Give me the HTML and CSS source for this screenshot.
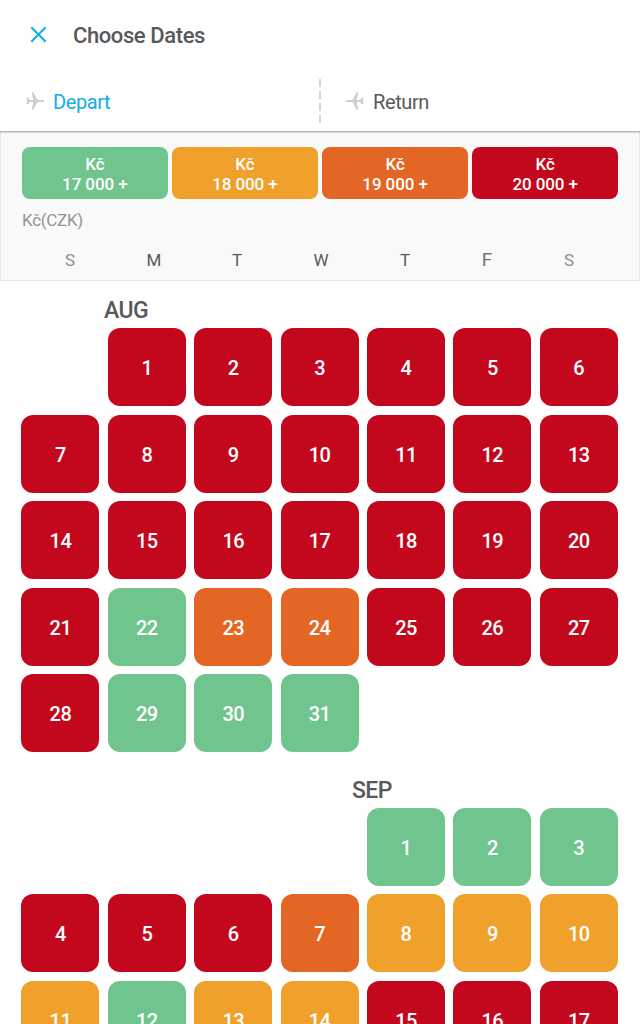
FILE: index.html
```html
<!DOCTYPE html>
<html lang="en">
<head>
    <meta charset="UTF-8">
    <title>Choose Dates</title>
    <link rel="stylesheet" href="styles.css">
</head>
<body>

    <header class="header">
        <div class="title-bar">
            <svg class="close" viewBox="0 0 16 16"><path d="M1.2 1.2 14.8 14.8M14.8 1.2 1.2 14.8"/></svg>
            <h1>Choose Dates</h1>
        </div>
        <div class="tabs">
            <div class="tab depart">
                <svg class="plane" viewBox="0 0 18 18"><path d="M18 9c0-.7-.5-1.100-1.200-1.100H11.600L7.500.500H5.700L7.300 7.900H3.900L2.200 5.800H.3L1.200 9 .3 12.200H2.200L3.900 10.100H7.300L5.700 17.500H7.500L11.600 10.100H16.800C17.500 10.100 18 9.700 18 9z"/></svg>
                <span>Depart</span>
            </div>
            <svg class="divider" viewBox="0 0 2 44"><path d="M1 0V44"/></svg>
            <div class="tab return">
                <svg class="plane flip" viewBox="0 0 18 18"><path d="M18 9c0-.7-.5-1.100-1.200-1.100H11.600L7.500.500H5.700L7.300 7.900H3.900L2.200 5.800H.3L1.200 9 .3 12.200H2.200L3.900 10.100H7.300L5.700 17.500H7.500L11.600 10.100H16.800C17.500 10.100 18 9.700 18 9z"/></svg>
                <span>Return</span>
            </div>
        </div>
    </header>

    <!-- price legend and weekdays -->
    <section class="panel">
        <div class="legend">
            <div class="price green">Kč<br>17 000 +</div>
            <div class="price yellow">Kč<br>18 000 +</div>
            <div class="price orange">Kč<br>19 000 +</div>
            <div class="price red">Kč<br>20 000 +</div>
        </div>
        <p class="currency">Kč(CZK)</p>
        <div class="weekdays">
            <span class="weekend">S</span>
            <span>M</span>
            <span>T</span>
            <span>W</span>
            <span>T</span>
            <span class="friday">F</span>
            <span class="weekend">S</span>
        </div>
    </section>

    <main class="calendar">
        <section class="month">
            <h2 class="aug">AUG</h2>
            <div class="days">
                <div class="day red start-mon">1</div>
                <div class="day red">2</div>
                <div class="day red">3</div>
                <div class="day red">4</div>
                <div class="day red">5</div>
                <div class="day red">6</div>
                <div class="day red">7</div>
                <div class="day red">8</div>
                <div class="day red">9</div>
                <div class="day red">10</div>
                <div class="day red">11</div>
                <div class="day red">12</div>
                <div class="day red">13</div>
                <div class="day red">14</div>
                <div class="day red">15</div>
                <div class="day red">16</div>
                <div class="day red">17</div>
                <div class="day red">18</div>
                <div class="day red">19</div>
                <div class="day red">20</div>
                <div class="day red">21</div>
                <div class="day green">22</div>
                <div class="day orange">23</div>
                <div class="day orange">24</div>
                <div class="day red">25</div>
                <div class="day red">26</div>
                <div class="day red">27</div>
                <div class="day red">28</div>
                <div class="day green">29</div>
                <div class="day green">30</div>
                <div class="day green">31</div>
            </div>
        </section>

        <section class="month">
            <h2 class="sep">SEP</h2>
            <div class="days">
                <div class="day green start-thu">1</div>
                <div class="day green">2</div>
                <div class="day green">3</div>
                <div class="day red">4</div>
                <div class="day red">5</div>
                <div class="day red">6</div>
                <div class="day orange">7</div>
                <div class="day yellow">8</div>
                <div class="day yellow">9</div>
                <div class="day yellow">10</div>
                <div class="day yellow">11</div>
                <div class="day green">12</div>
                <div class="day yellow">13</div>
                <div class="day yellow">14</div>
                <div class="day red">15</div>
                <div class="day red">16</div>
                <div class="day red">17</div>
            </div>
        </section>
    </main>

</body>
</html>
```
FILE: styles.css
```css
* {
    box-sizing: border-box;
}

body {
    margin: 0;
    height: 1024px;
    overflow: hidden;
    background-color: #fff;
    color: #58595b;
    font-family: Roboto, sans-serif;
}

h1, h2, p {
    margin: 0;
}

/* header */
.header {
    height: 131px;
    position: relative;
    background-color: #fff;
    box-shadow: 0 1px 2px rgba(0,0,0,0.4);
}

.title-bar {
    display: flex;
    align-items: center;
    height: 70px;
    padding-left: 30px;
}

.close {
    width: 17px;
    height: 17px;
    margin: -2px 26px 0 0;
    fill: none;
    stroke: #12aee5;
    stroke-width: 2;
}

h1 {
    font-size: 22px;
    font-weight: 500;
    letter-spacing: -0.4px;
}

.tabs {
    display: flex;
    height: 61px;
    padding-top: 9px;
}

.tab {
    display: flex;
    align-items: center;
    height: 44px;
    font-size: 20px;
    letter-spacing: -0.4px;
}

.tab span {
    padding-top: 2px;
}

.depart {
    width: 319px;
    padding-left: 26px;
    color: #12aee5;
}

.return {
    padding-left: 25px;
}

.plane {
    width: 18px;
    height: 18px;
    margin: -1px 9px 0 0;
    fill: #cecece;
}

.flip {
    transform: scaleX(-1);
}

.divider {
    width: 2px;
    height: 44px;
    fill: none;
    stroke: #d6d6d6;
    stroke-width: 2;
    stroke-dasharray: 8 4;
}

/* legend */
.panel {
    height: 150px;
    padding: 15.500px 21px 0;
    background-color: #f9f9f9;
    border: 1px solid #e6e6e6;
    border-top: none;
}

.legend {
    display: grid;
    grid-template-columns: repeat(4, 1fr);
    gap: 4.500px;
}

.price {
    height: 52.500px;
    padding-top: 7px;
    border-radius: 8px;
    color: #fff;
    font-size: 17px;
    font-weight: 500;
    line-height: 20px;
    letter-spacing: -0.1px;
    text-align: center;
}

.currency {
    margin-top: 11px;
    color: #939393;
    font-size: 17px;
    line-height: 20px;
    letter-spacing: -0.3px;
}

.weekdays {
    display: grid;
    grid-template-columns: 84px 84px 82px 86px 82px 82px 82px;
    margin: 20px 0 0 6px;
    font-size: 17px;
    line-height: 20px;
    text-align: center;
}

.weekend {
    color: #8e8e8e;
}

.friday {
    color: #747474;
    font-size: 19px;
}

/* calendar */
.calendar {
    padding: 16px 22px 0 21.400px;
}

.month {
    height: 479.500px;
}

h2 {
    height: 31.400px;
    font-size: 23px;
    font-weight: 500;
    line-height: 27px;
    letter-spacing: -0.500px;
}

.aug {
    padding-left: 82.500px;
}

.sep {
    padding-left: 330.500px;
}

.days {
    display: grid;
    grid-template-columns: repeat(7, 78px);
    grid-auto-rows: 78px;
    gap: 8.400px;
}

.day {
    display: flex;
    align-items: center;
    justify-content: center;
    padding-top: 2px;
    border-radius: 12px;
    color: #fff;
    font-size: 20px;
    font-weight: 500;
    letter-spacing: -0.600px;
}

.start-mon {
    grid-column: 2;
}

.start-thu {
    grid-column: 5;
}

.green {
    background-color: #70c48e;
}

.yellow {
    background-color: #f0a12b;
}

.orange {
    background-color: #e36624;
}

.red {
    background-color: #c3081e;
}
```
